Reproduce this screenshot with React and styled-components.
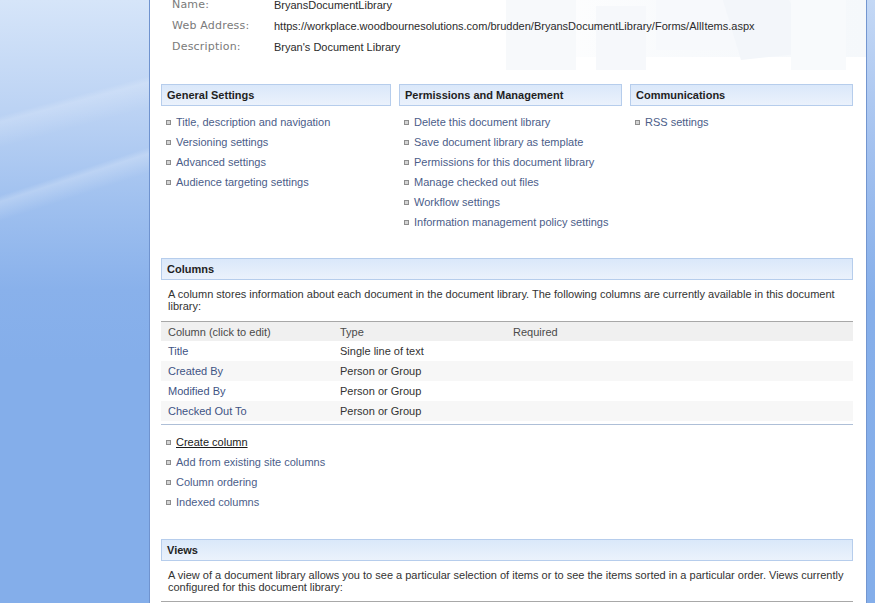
import React from "react";
import styled, { createGlobalStyle } from "styled-components";

const GlobalStyle = createGlobalStyle`
  html, body {
    margin: 0;
    padding: 0;
    overflow: hidden;
  }
  body {
    font-family: "Liberation Sans", Arial, sans-serif;
    font-size: 11px;
    color: #333;
  }
`;

const info = [
  ["Name:", "BryansDocumentLibrary"],
  ["Web Address:", "https://workplace.woodbournesolutions.com/brudden/BryansDocumentLibrary/Forms/AllItems.aspx"],
  ["Description:", "Bryan's Document Library"],
];

const settings = [
  {
    title: "General Settings",
    links: [
      "Title, description and navigation",
      "Versioning settings",
      "Advanced settings",
      "Audience targeting settings",
    ],
  },
  {
    title: "Permissions and Management",
    links: [
      "Delete this document library",
      "Save document library as template",
      "Permissions for this document library",
      "Manage checked out files",
      "Workflow settings",
      "Information management policy settings",
    ],
  },
  {
    title: "Communications",
    links: ["RSS settings"],
  },
];

const columns = [
  ["Title", "Single line of text", ""],
  ["Created By", "Person or Group", ""],
  ["Modified By", "Person or Group", ""],
  ["Checked Out To", "Person or Group", ""],
];

const columnLinks = [
  { label: "Create column", hover: true },
  { label: "Add from existing site columns" },
  { label: "Column ordering" },
  { label: "Indexed columns" },
];

const Page = styled.div`
  display: flex;
  height: 603px;
  width: 875px;
  overflow: hidden;
`;

const SideBar = styled.div`
  width: 149px;
  flex: none;
  border-right: 1px solid #6f93cf;
  background:
    linear-gradient(162deg, transparent 0%, transparent 30%, rgba(255, 255, 255, 0.22) 31%, transparent 34%, transparent 100%),
    linear-gradient(165deg, transparent 0%, transparent 18%, rgba(255, 255, 255, 0.18) 19%, transparent 23%, transparent 100%),
    linear-gradient(to bottom, #d6e5f9 0%, #bcd3f4 18%, #9fc0ef 34%, #89b1eb 48%, #84aeea 60%, #84aeea 100%);
`;

const RightStrip = styled.div`
  width: 8px;
  flex: none;
  border-left: 1px solid #7396d0;
  background: linear-gradient(to bottom, #c4d8f5 0%, #a3c1ef 25%, #86afea 50%, #84aeea 100%);
`;

const Main = styled.div`
  flex: 1;
  min-width: 0;
  background: #fff;
  padding: 0 13px 0 11px;
  overflow: hidden;
`;

const InfoBlock = styled.div`
  position: relative;
  margin: -6px -13px 0 -11px;
  padding: 0 13px 0 22px;
  height: 63px;
  background: linear-gradient(to right, #ffffff 0%, #ffffff 50%, #f8fafc 75%, #f5f8fb 100%);
`;

const Watermark = styled.svg`
  position: absolute;
  right: 0;
  top: 0;
  width: 380px;
  height: 76px;
  pointer-events: none;
`;

const InfoRow = styled.div`
  position: relative;
  display: grid;
  grid-template-columns: 102px 1fr;
  height: 21px;
  align-items: center;
  white-space: nowrap;
`;

const InfoLabel = styled.span`
  font-family: "DejaVu Sans", Verdana, sans-serif;
  font-size: 11px;
  color: #7a7a7a;
  letter-spacing: 0.2px;
`;

const InfoValue = styled.span`
  color: #2b2b2b;
`;

const SettingsGrid = styled.div`
  display: grid;
  grid-template-columns: 230px 223px 1fr;
  column-gap: 8px;
  margin-top: 27px;
  align-items: start;
`;

const Section = styled.div`
  margin-top: ${(p) => p.$top || 0}px;
`;

const SectionHeader = styled.div`
  box-sizing: border-box;
  height: 22px;
  padding-left: 5px;
  display: flex;
  align-items: center;
  font-weight: bold;
  font-size: 11px;
  color: #1f1f1f;
  border: 1px solid #b6cdec;
  background: linear-gradient(to bottom, #dae8fa 0%, #e4eefb 60%, #ebf2fc 100%);
`;

const LinkList = styled.ul`
  list-style: none;
  margin: 0;
  padding: ${(p) => p.$top || 6}px 0 0 5px;
`;

const LinkItem = styled.li`
  display: flex;
  align-items: center;
  gap: 5px;
  height: 20px;
  white-space: nowrap;
`;

const Bullet = styled.span`
  box-sizing: border-box;
  width: 5px;
  height: 5px;
  flex: none;
  border: 1px solid #8d8d8d;
  background: #d4d4d4;
`;

const LinkText = styled.a`
  color: ${(p) => (p.$hover ? "#1a1a1a" : "#4b5d89")};
  text-decoration: ${(p) => (p.$hover ? "underline" : "none")};
  cursor: pointer;
`;

const Description = styled.div`
  margin-top: 8px;
  padding-left: 7px;
  line-height: 12px;
  color: #333;
`;

const Table = styled.div`
  margin-top: 9px;
  border-top: 1px solid #a8a8a8;
  border-bottom: 1px solid #aebfd7;
  padding-bottom: 3px;
`;

const Row = styled.div`
  display: grid;
  grid-template-columns: 172px 173px 1fr;
  align-items: center;
  height: ${(p) => (p.$head ? 19 : 20)}px;
  background: ${(p) => (p.$head ? "#f0f0f0" : p.$alt ? "#f7f7f7" : "#fff")};
  color: ${(p) => (p.$head ? "#4a4a4a" : "#333")};
`;

const Cell = styled.span`
  padding-left: 7px;
  white-space: nowrap;
`;

const CellLink = styled(Cell)`
  color: #3e5384;
`;

const ViewsTable = styled.div`
  margin-top: 8px;
  border-top: 1px solid #a8a8a8;
  height: 20px;
`;

const Bullets = ({ items, top }) => (
  <LinkList $top={top}>
    {items.map((it) => {
      const label = typeof it === "string" ? it : it.label;
      return (
        <LinkItem key={label}>
          <Bullet />
          <LinkText $hover={it.hover}>{label}</LinkText>
        </LinkItem>
      );
    })}
  </LinkList>
);

export default function App() {
  return (
    <>
      <GlobalStyle />
      <Page>
        <SideBar />
        <Main>
          <InfoBlock>
            <Watermark viewBox="0 0 380 76" preserveAspectRatio="none">
              <rect x="20" y="0" width="70" height="76" fill="#f7f9fb" />
              <rect x="110" y="12" width="50" height="64" fill="#f6f8fb" />
              <rect x="170" y="0" width="90" height="56" fill="#f7f9fc" />
              <polygon points="235,0 300,0 330,58 255,66" fill="#f3f6fa" />
              <rect x="305" y="0" width="55" height="76" fill="#f8fafc" />
            </Watermark>
            {info.map(([label, value]) => (
              <InfoRow key={label}>
                <InfoLabel>{label}</InfoLabel>
                <InfoValue>{value}</InfoValue>
              </InfoRow>
            ))}
          </InfoBlock>

          <SettingsGrid>
            {settings.map((s) => (
              <Section key={s.title}>
                <SectionHeader>{s.title}</SectionHeader>
                <Bullets items={s.links} />
              </Section>
            ))}
          </SettingsGrid>

          <Section $top={26}>
            <SectionHeader>Columns</SectionHeader>
            <Description>
              A column stores information about each document in the document library. The following columns are currently available in this document
              <br />
              library:
            </Description>
            <Table>
              <Row $head>
                <Cell>Column (click to edit)</Cell>
                <Cell>Type</Cell>
                <Cell>Required</Cell>
              </Row>
              {columns.map(([name, type, req], i) => (
                <Row key={name} $alt={i % 2 === 1}>
                  <CellLink>{name}</CellLink>
                  <Cell>{type}</Cell>
                  <Cell>{req}</Cell>
                </Row>
              ))}
            </Table>
            <Bullets items={columnLinks} top={7} />
          </Section>

          <Section $top={27}>
            <SectionHeader>Views</SectionHeader>
            <Description>
              A view of a document library allows you to see a particular selection of items or to see the items sorted in a particular order. Views currently
              <br />
              configured for this document library:
            </Description>
            <ViewsTable />
          </Section>
        </Main>
        <RightStrip />
      </Page>
    </>
  );
}
